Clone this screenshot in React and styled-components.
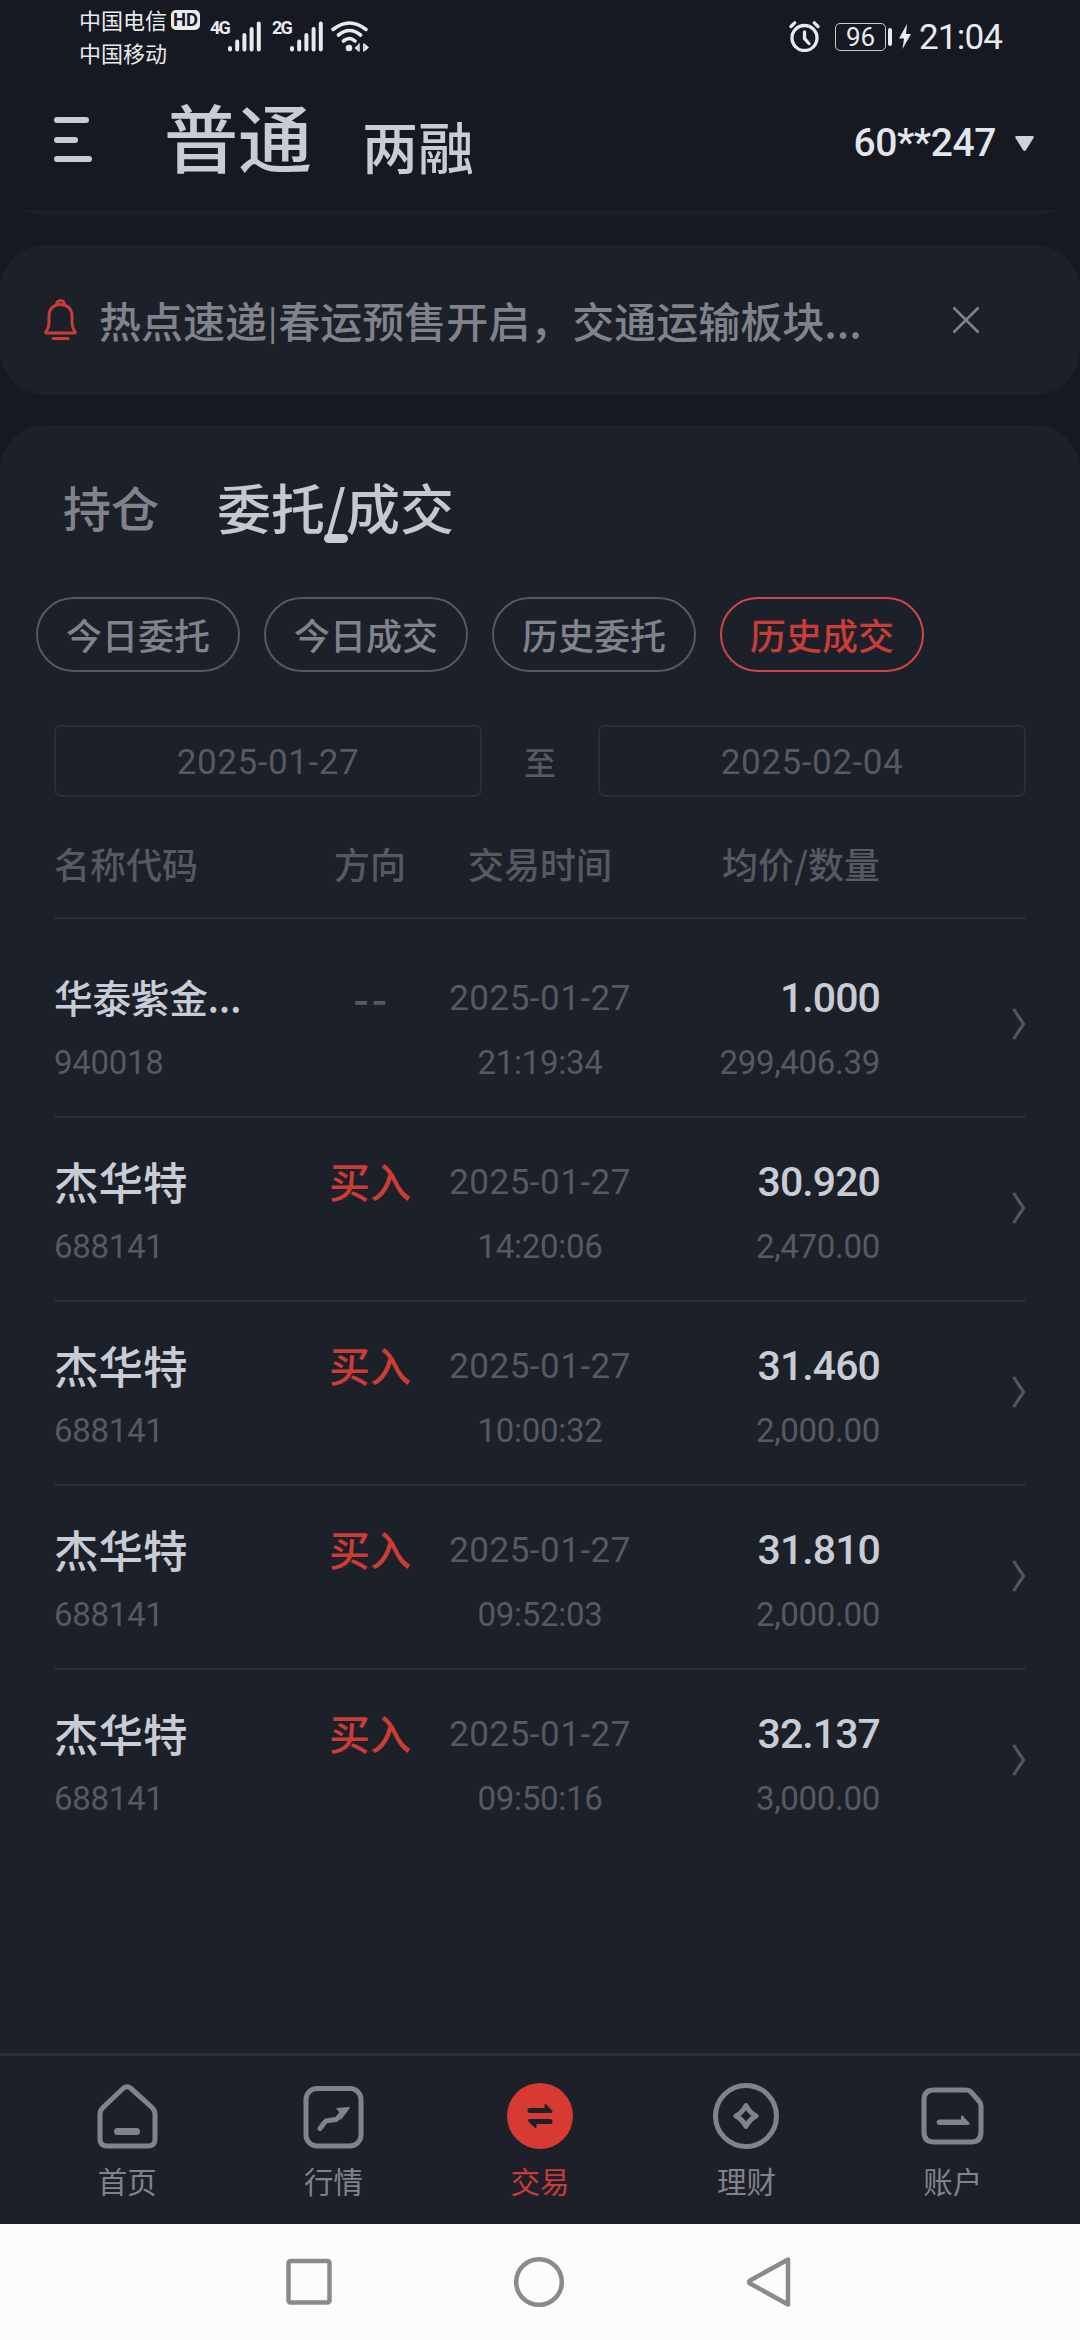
import React from "react";
import styled, { createGlobalStyle, css } from "styled-components";

const cjk = `"Noto Sans CJK SC", sans-serif`;
const din = `Roboto, "Noto Sans CJK SC", sans-serif`;

const Global = createGlobalStyle`
  *, *::before, *::after { box-sizing: border-box; }
  body { margin: 0; background: #161822; }
  svg { display: block; flex: none; }
`;

const Screen = styled.div`
  width: 1080px;
  height: 2340px;
  display: flex;
  flex-direction: column;
  background: #161822;
  font-family: ${cjk};
  overflow: hidden;
  white-space: nowrap;
`;

/* ---------- status bar ---------- */
const StatusBar = styled.div`
  height: 74px;
  flex: none;
  display: flex;
  justify-content: space-between;
  padding: 0 77px 0 79px;
  color: #e9eaec;
`;
const StatusLeft = styled.div`
  display: flex;
`;
const Carriers = styled.div`
  display: flex;
  flex-direction: column;
  padding-top: 3px;
  font-size: 22px;
  line-height: 32.5px;
`;
const CarrierLine = styled.div`
  display: flex;
  align-items: center;
  gap: 4px;
`;
const HdBadge = styled.span`
  width: 29px;
  height: 20px;
  margin-top: 2px;
  border-radius: 5px;
  background: #e9eaec;
  color: #161822;
  font: 700 18.5px/20px ${din};
  text-align: center;
`;
const Signals = styled.div`
  display: flex;
  align-items: flex-start;
  padding: 21px 0 0 10px;
`;
const NetLabel = styled.span`
  width: 18px;
  font: 700 18px/14px ${din};
  letter-spacing: -1.8px;
`;
const SignalGroup = styled.div`
  display: flex;
  margin-right: ${(p) => p.$gap}px;
`;
const StatusRight = styled.div`
  display: flex;
  align-items: flex-start;
  padding-top: 21px;
`;
const Battery = styled.div`
  width: 51px;
  height: 28px;
  margin: 2px 2px 0 15px;
  border: 1.5px solid #c9cbd0;
  border-radius: 5px;
  font: 400 26px/26px ${din};
  text-align: center;
`;
const BatteryTip = styled.div`
  width: 4px;
  height: 18px;
  margin: 7px 7px 0 0;
  border-radius: 2px;
  background: #e9eaec;
`;
const Clock = styled.span`
  margin: -4px 0 0 8px;
  width: 84px;
  font: 400 35px/41px ${din};
  letter-spacing: -0.8px;
`;

/* ---------- header ---------- */
const Header = styled.header`
  height: 136px;
  flex: none;
  display: flex;
  align-items: flex-start;
  padding: 0 46px 0 54px;
  color: #c8ccd6;
`;
const MenuButton = styled.div`
  display: flex;
  flex-direction: column;
  gap: 13.5px;
  width: 110px;
  padding-top: 43px;
`;
const MenuLine = styled.div`
  width: ${(p) => p.$w}px;
  height: 6px;
  border-radius: 3px;
  background: #c8ccd6;
`;
const HeaderTab = styled.div`
  font-weight: 500;
  font-size: ${(p) => p.$size}px;
  line-height: 80px;
  padding-top: ${(p) => p.$top}px;
  margin-right: ${(p) => p.$gap}px;
`;
const Account = styled.div`
  margin-left: auto;
  display: flex;
  align-items: center;
  gap: 19px;
  padding-top: 44px;
  color: #e2e5ec;
  font: 500 39px/50px ${din};
  letter-spacing: -0.4px;
`;

/* ---------- cards ---------- */
const PeekStrip = styled.div`
  height: 5px;
  flex: none;
  display: flex;
  align-items: flex-end;
  overflow: hidden;
`;
const PeekCard = styled.div`
  width: 100%;
  height: 44px;
  flex: none;
  border-radius: 0 0 42px 42px;
  background: #1d202b;
`;
const Notice = styled.div`
  height: 150px;
  flex: none;
  margin: 30px 0;
  padding: 0 100px 0 43px;
  display: flex;
  align-items: center;
  border-radius: 45px;
  background: #1c2028;
  color: #80838c;
`;
const NoticeText = styled.div`
  flex: 1;
  margin-left: 20px;
  font-size: 42px;
  font-weight: 500;
  line-height: 60px;
`;
const Divider = styled.span`
  padding: 0 1px;
  font-size: 33px;
  line-height: 1;
  vertical-align: 3px;
`;
const Panel = styled.main`
  flex: 1;
  border-radius: 45px 45px 0 0;
  background: #1c2028;
  padding: 0 54px;
`;
const Tabs = styled.div`
  display: flex;
  align-items: center;
  height: 172px;
  padding: 0 0 8px 9px;
  gap: 58px;
`;
const Tab = styled.div`
  position: relative;
  font-weight: 500;
  font-size: ${(p) => (p.$active ? 54 : 48)}px;
  line-height: 72px;
  padding-bottom: ${(p) => (p.$active ? 0 : 3)}px;
  color: ${(p) => (p.$active ? "#c6c8cd" : "#80838c")};
  ${(p) =>
    p.$active &&
    css`
      &::after {
        content: "";
        position: absolute;
        left: 50%;
        bottom: 0;
        width: 24px;
        height: 9px;
        margin-left: -12px;
        border-radius: 4.5px;
        background: #c8ccd6;
      }
    `}
`;
const Pills = styled.div`
  display: flex;
  gap: 24px;
  margin-left: -18px;
`;
const Pill = styled.div`
  width: 204px;
  height: 75px;
  border: 2px solid ${(p) => (p.$active ? "#d2444c" : "#565962")};
  border-radius: 38px;
  color: ${(p) => (p.$active ? "#c93c37" : "#80838c")};
  font-size: 36px;
  font-weight: 500;
  line-height: 70px;
  text-align: center;
`;
const DateRange = styled.div`
  display: flex;
  justify-content: space-between;
  align-items: center;
  margin-top: 53px;
  color: #565962;
  font-size: 32px;
  font-weight: 500;
`;
const DateField = styled.div`
  width: 428px;
  height: 72px;
  border: 2px solid #2a2d36;
  border-radius: 7px;
  font: 400 35px/71px ${din};
  letter-spacing: 0.6px;
  text-align: center;
`;

/* ---------- table ---------- */
const Columns = styled.div`
  display: grid;
  grid-template-columns: 256px 120px 220px 230px 1fr;
  border-bottom: 2px solid #2a2d36;
`;
const TableHead = styled(Columns)`
  height: 122px;
  align-items: center;
  padding-top: 11px;
  margin-bottom: 15px;
  color: #565962;
  font-size: 36px;
  font-weight: 500;
`;
const HeadCell = styled.div`
  text-align: ${(p) => p.$align || "left"};
`;
const Row = styled(Columns)`
  height: 184px;
  ${(p) => p.$last && "border-color: transparent;"}
`;
const Cell = styled.div`
  display: flex;
  flex-direction: column;
  align-items: ${(p) => p.$align || "flex-start"};
  padding-top: 33px;
`;
const Name = styled.div`
  height: 64px;
  color: #c8ccd6;
  font-weight: 500;
  font-size: ${(p) => (p.$small ? 38.7 : 44.5)}px;
  line-height: 59px;
  letter-spacing: ${(p) => (p.$small ? -0.3 : 0)}px;
`;
const Side = styled.div`
  height: 64px;
  color: ${(p) => (p.$buy ? "#cc3c36" : "#565962")};
  font: 500 ${(p) => (p.$buy ? 41 : 44)}px/59px ${cjk};
  letter-spacing: ${(p) => (p.$buy ? 0 : 2.5)}px;
  padding-left: ${(p) => (p.$buy ? 0 : 3)}px;
`;
const TradeDate = styled.div`
  height: 64px;
  color: #565962;
  font: 400 35px/64px ${din};
  letter-spacing: 0.5px;
`;
const Price = styled.div`
  height: 64px;
  color: #c8ccd6;
  font: 500 41px/63px ${din};
  letter-spacing: -0.9px;
`;
const Sub = styled.div`
  height: 64px;
  color: #565962;
  font: 400 33px/64px ${din};
  letter-spacing: -0.3px;
`;
const More = styled.div`
  display: flex;
  justify-content: flex-end;
  padding-top: 74px;
`;

/* ---------- bottom bars ---------- */
const TabBar = styled.nav`
  height: 171px;
  flex: none;
  display: flex;
  padding: 0 24px;
  border-top: 3px solid #2b2e37;
  background: #1e2029;
`;
const TabItem = styled.div`
  flex: 1;
  display: flex;
  flex-direction: column;
  align-items: center;
  padding-top: 24px;
  color: ${(p) => (p.$active ? "#c93c37" : "#80838c")};
  font-size: 29.5px;
  line-height: 40px;
`;
const TabLabel = styled.span`
  margin-top: 8px;
`;
const SystemBar = styled.div`
  height: 116px;
  flex: none;
  display: flex;
  justify-content: space-between;
  align-items: center;
  padding: 0 284px 0 282px;
  background: #fcfcfc;
`;

/* ---------- drawings ---------- */
const SignalIcon = () => (
  <svg width="34" height="31" viewBox="0 0 34 31" stroke="#e9eaec" strokeWidth="4" strokeLinecap="round">
    <path d="M2 27v1.5M9.200 20.500v8M16.400 14v14.500M23.600 8v20.500M30.800 2.500v26" />
  </svg>
);
const WifiIcon = () => (
  <svg width="38" height="31" viewBox="0 0 38 31" fill="none" stroke="#e9eaec" strokeWidth="3.600" strokeLinecap="round">
    <path d="M2 8.500Q18.500-4.500 35 8.500M7.500 14Q18.500 5 29.500 14M12.500 20Q18.500 15 24 20" />
    <circle cx="18" cy="27" r="3.300" fill="#e9eaec" stroke="none" />
    <path d="M23.500 27l4-3.500v7zM38 26.500l-4.500-4v8z" fill="#e9eaec" stroke="none" />
    <path d="M28 23v7M32.800 23v7" strokeWidth="1.500" />
  </svg>
);
const AlarmIcon = () => (
  <svg width="31" height="31" viewBox="0 0 31 31" fill="none" stroke="#e9eaec" strokeWidth="3.300" strokeLinecap="round">
    <circle cx="15.500" cy="17" r="12.500" />
    <path d="M15.500 11v6.500l4.500 5" />
    <path d="M2 5.500l3.700-3.700M29 5.500l-3.700-3.700" />
  </svg>
);
const BoltIcon = () => (
  <svg width="12" height="30" viewBox="0 0 12 30" fill="#e9eaec">
    <path d="M8 3L0 17.500h5L3.500 28 12 13H7z" />
  </svg>
);
const CaretIcon = () => (
  <svg width="19" height="15" viewBox="0 0 19 15" fill="#cfd2d9">
    <path d="M1.500 0h16q2 0 1 2l-7.500 12q-1.500 2-3 0L.5 2Q-.5 0 1.500 0z" />
  </svg>
);
const BellIcon = () => (
  <svg width="36" height="42" viewBox="0 0 36 42" fill="none" stroke="#c93c37" strokeWidth="3">
    <path d="M4 34q-2 0-1-1.500c2.500-3 3-6 3-10V17C6 9.500 11 5.500 17.500 5.500S29 9.500 29 17v5.500c0 4 .5 7 3 10q1 1.500-1 1.500z" strokeLinejoin="round" />
    <path d="M13.500 5.500a4 4 0 0 1 8 0M10 39.500h15" strokeLinecap="round" />
  </svg>
);
const CloseIcon = () => (
  <svg width="28" height="28" viewBox="0 0 28 28" stroke="#80838c" strokeWidth="2.500">
    <path d="M1.500 1.500l25 25M26.500 1.500l-25 25" />
  </svg>
);
const ChevronIcon = () => (
  <svg width="14" height="32" viewBox="0 0 14 32" fill="none" stroke="#565962" strokeWidth="3">
    <path d="M1.500 1l10 15-10 15" />
  </svg>
);
const line = { fill: "none", stroke: "#80838c", strokeWidth: 5 };
const HomeIcon = () => (
  <svg width="72" height="72" viewBox="0 0 72 72" {...line}>
    <path d="M32 8.500q4-3.500 8 0l21 19q3 3 3 6V59q0 7-7 7H16q-7 0-7-7V33.500q0-3 3-6z" />
    <path d="M26.500 51.500h19" strokeWidth="7" strokeLinecap="round" />
  </svg>
);
const MarketIcon = () => (
  <svg width="72" height="72" viewBox="0 0 72 72" {...line}>
    <rect x="8" y="8.500" width="55" height="57.500" rx="11" />
    <path d="M22 48.500l4.500-6q1.500-2 4-2l6-.7q2 0 3.500-2l6-7" strokeLinecap="round" />
    <path d="M38 28l13-1q1.500 0 .5 1.500L43 40l-2-8z" fill="#80838c" stroke="none" />
  </svg>
);
const TradeIcon = () => (
  <svg width="72" height="72" viewBox="0 0 72 72" fill="#1e2029">
    <circle cx="36" cy="36" r="33" fill="#d63a33" />
    <path d="M26 28h14.500v-3q.5-1.500 2-.5l6 6.500q.5 2-1 2H26a2.500 2.500 0 0 1 0-5z" />
    <path d="M46 44H32.500v3q-.5 1.500-2 .5l-6.500-6.500q-.5-2 1-2H46a2.500 2.500 0 0 1 0 5z" />
  </svg>
);
const WealthIcon = () => (
  <svg width="72" height="72" viewBox="0 0 72 72" {...line}>
    <circle cx="36" cy="36" r="30.500" />
    <path d="M36 25.500q3.500 7 10 10.500-6.500 3.500-10 10.500-3.500-7-10-10.500 6.500-3.500 10-10.500z" strokeLinejoin="round" />
  </svg>
);
const AccountIcon = () => (
  <svg width="72" height="72" viewBox="0 0 72 72" {...line}>
    <path d="M16.500 10H49q3 0 5 2l7.500 8.500q2.500 2.500 2.500 5.500V52q0 10-10 10H17Q7 62 7 52V20q0-10 9.500-10z" />
    <path d="M22.500 39.500h21.500v-3q.5-1.500 2-.5l6.500 7q.5 2-1.500 2H22.500a2.700 2.700 0 0 1 0-5.500z" fill="#80838c" stroke="none" />
  </svg>
);
const RecentIcon = () => (
  <svg width="54" height="54" viewBox="0 0 54 54" fill="none" stroke="#8a8a8a" strokeWidth="4.500">
    <rect x="6.500" y="6" width="41" height="41.500" rx="2" />
  </svg>
);
const HomeKeyIcon = () => (
  <svg width="54" height="54" viewBox="0 0 54 54" fill="none" stroke="#8a8a8a" strokeWidth="4.500">
    <circle cx="27" cy="27" r="22.800" />
  </svg>
);
const BackIcon = () => (
  <svg width="54" height="54" viewBox="0 0 54 54" fill="none" stroke="#8a8a8a" strokeWidth="4.500" strokeLinejoin="round">
    <path d="M46 4.500v45L8 28.500q-2-1.500 0-3z" />
  </svg>
);

/* ---------- data ---------- */
const rows = [
  { name: "华泰紫金...", small: true, code: "940018", side: "--", time: "21:19:34", price: "1.000", qty: "299,406.39" },
  { name: "杰华特", code: "688141", side: "买入", time: "14:20:06", price: "30.920", qty: "2,470.00" },
  { name: "杰华特", code: "688141", side: "买入", time: "10:00:32", price: "31.460", qty: "2,000.00" },
  { name: "杰华特", code: "688141", side: "买入", time: "09:52:03", price: "31.810", qty: "2,000.00" },
  { name: "杰华特", code: "688141", side: "买入", time: "09:50:16", price: "32.137", qty: "3,000.00" },
];
const pills = ["今日委托", "今日成交", "历史委托", "历史成交"];
const navItems = [
  ["首页", HomeIcon],
  ["行情", MarketIcon],
  ["交易", TradeIcon],
  ["理财", WealthIcon],
  ["账户", AccountIcon],
];

export default function App() {
  return (
    <Screen>
      <Global />
      <StatusBar>
        <StatusLeft>
          <Carriers>
            <CarrierLine>
              中国电信<HdBadge>HD</HdBadge>
            </CarrierLine>
            <CarrierLine>中国移动</CarrierLine>
          </Carriers>
          <Signals>
            <SignalGroup $gap={10}>
              <NetLabel>4G</NetLabel>
              <SignalIcon />
            </SignalGroup>
            <SignalGroup $gap={7}>
              <NetLabel>2G</NetLabel>
              <SignalIcon />
            </SignalGroup>
            <WifiIcon />
          </Signals>
        </StatusLeft>
        <StatusRight>
          <AlarmIcon />
          <Battery>96</Battery>
          <BatteryTip />
          <BoltIcon />
          <Clock>21:04</Clock>
        </StatusRight>
      </StatusBar>

      <Header>
        <MenuButton>
          <MenuLine $w={35} />
          <MenuLine $w={24} />
          <MenuLine $w={38} />
        </MenuButton>
        <HeaderTab $size={74} $top={21} $gap={50}>普通</HeaderTab>
        <HeaderTab $size={56} $top={31} $gap={0}>两融</HeaderTab>
        <Account>
          60**247
          <CaretIcon />
        </Account>
      </Header>

      <PeekStrip>
        <PeekCard />
      </PeekStrip>

      <Notice>
        <BellIcon />
        <NoticeText>
          热点速递<Divider>|</Divider>春运预售开启，交通运输板块...
        </NoticeText>
        <CloseIcon />
      </Notice>

      <Panel>
        <Tabs>
          <Tab>持仓</Tab>
          <Tab $active>委托/成交</Tab>
        </Tabs>
        <Pills>
          {pills.map((label, i) => (
            <Pill key={label} $active={i === 3}>{label}</Pill>
          ))}
        </Pills>
        <DateRange>
          <DateField>2025-01-27</DateField>
          至
          <DateField>2025-02-04</DateField>
        </DateRange>
        <TableHead>
          <HeadCell>名称代码</HeadCell>
          <HeadCell $align="center">方向</HeadCell>
          <HeadCell $align="center">交易时间</HeadCell>
          <HeadCell $align="right">均价/数量</HeadCell>
        </TableHead>
        {rows.map((r, i) => (
          <Row key={r.time} $last={i === rows.length - 1}>
            <Cell>
              <Name $small={r.small}>{r.name}</Name>
              <Sub>{r.code}</Sub>
            </Cell>
            <Cell $align="center">
              <Side $buy={r.side === "买入"}>{r.side}</Side>
            </Cell>
            <Cell $align="center">
              <TradeDate>2025-01-27</TradeDate>
              <Sub>{r.time}</Sub>
            </Cell>
            <Cell $align="flex-end">
              <Price>{r.price}</Price>
              <Sub>{r.qty}</Sub>
            </Cell>
            <More>
              <ChevronIcon />
            </More>
          </Row>
        ))}
      </Panel>

      <TabBar>
        {navItems.map(([label, Icon]) => (
          <TabItem key={label} $active={label === "交易"}>
            <Icon />
            <TabLabel>{label}</TabLabel>
          </TabItem>
        ))}
      </TabBar>
      <SystemBar>
        <RecentIcon />
        <HomeKeyIcon />
        <BackIcon />
      </SystemBar>
    </Screen>
  );
}
